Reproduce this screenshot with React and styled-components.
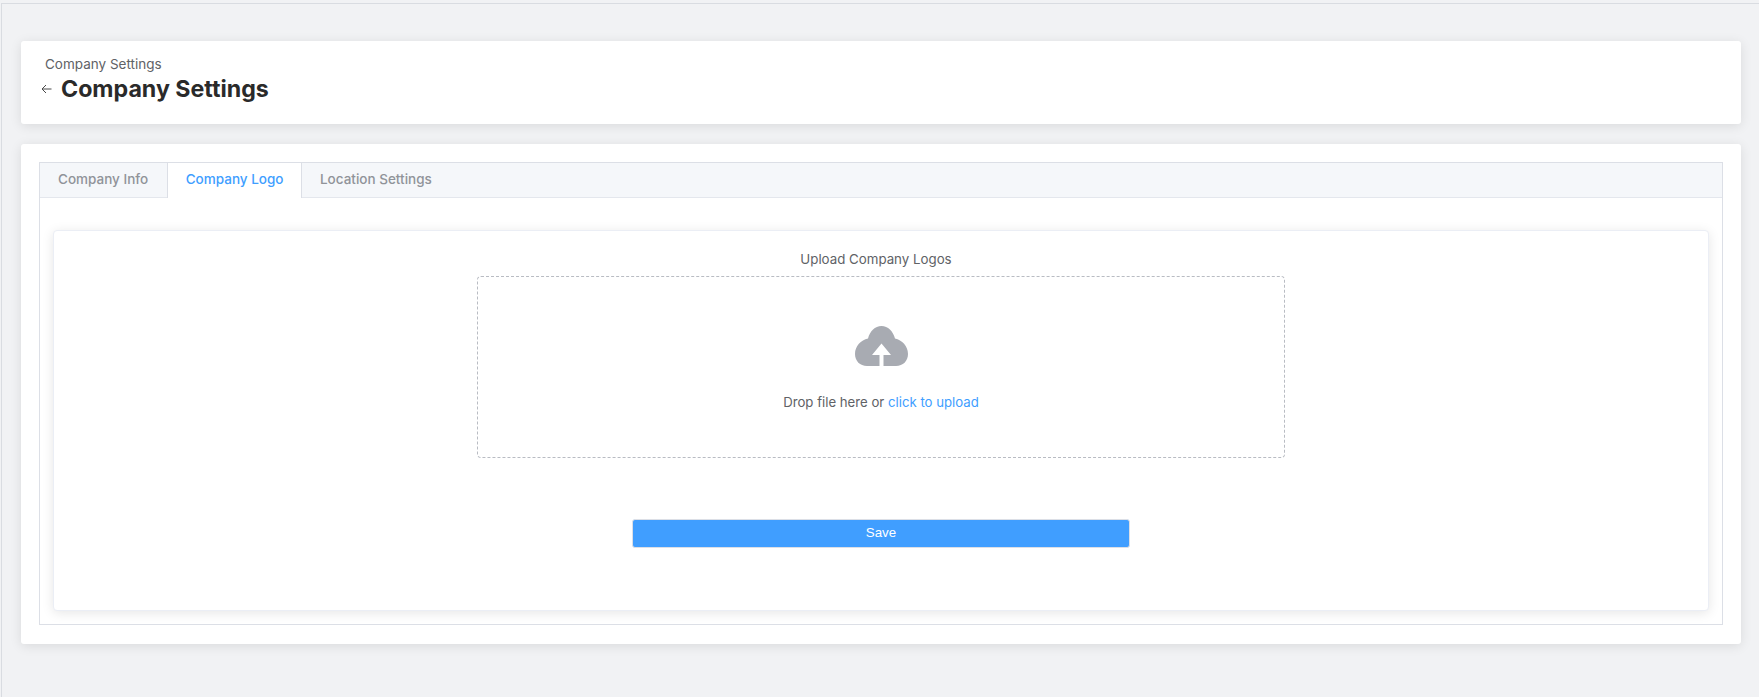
import React, { useState } from 'react';
import styled, { createGlobalStyle } from 'styled-components';

const GlobalStyle = createGlobalStyle`
  html, body {
    margin: 0;
    padding: 0;
    height: 100%;
    background: #f1f2f4;
  }
  body {
    font-family: Inter, "Open Sans", sans-serif;
    overflow: hidden;
  }
`;

const tabs = ['Company Info', 'Company Logo', 'Location Settings'];

function App() {
  const [activeTab, setActiveTab] = useState('Company Logo');

  return (
    <>
      <GlobalStyle />
      <Page>
        <Card>
          <HeaderInner>
            <Breadcrumb>Company Settings</Breadcrumb>
            <TitleRow>
              <BackIcon width="11" height="10" viewBox="0 0 11 10" aria-hidden="true">
                <path d="M10.500 5H1M5 1L1 5l4 4" fill="none" stroke="#4a4a4a" strokeWidth="1" />
              </BackIcon>
              <Title>Company Settings</Title>
            </TitleRow>
          </HeaderInner>
        </Card>

        <ContentCard>
          <TabsBox>
            <TabBar>
              {tabs.map((tab) => (
                <Tab key={tab} $active={tab === activeTab} onClick={() => setActiveTab(tab)}>
                  {tab}
                </Tab>
              ))}
            </TabBar>
            <TabBody>
              <Panel>
                <UploadLabel>Upload Company Logos</UploadLabel>
                <DropZone>
                  <svg width="53" height="40" viewBox="0 0 53 40" aria-hidden="true">
                    <path
                      fill="#a8abb2"
                      d="M12 40C5 40 0 35 0 28C0 20 6 14 13 12.500C15 5 20 0 26.500 0C33 0 38 5 40 12.500C47 14 53 20 53 28C53 35 48 40 41 40L28.500 40L28.500 29L36 29L26.500 17.500L17 29L24.500 29L24.500 40Z"
                    />
                  </svg>
                  <DropText>
                    Drop file here or <UploadLink>click to upload</UploadLink>
                  </DropText>
                </DropZone>
                <SaveButton type="button">Save</SaveButton>
              </Panel>
            </TabBody>
          </TabsBox>
        </ContentCard>
      </Page>
    </>
  );
}

const Page = styled.div`
  box-sizing: border-box;
  height: 694px;
  margin: 3px 0 0 1px;
  padding: 37px 18px 0 19px;
  border-top: 1px solid #d9dce1;
  border-left: 1px solid #d9dce1;
  background: #f1f2f4;
`;

const Card = styled.section`
  background: #fff;
  border-radius: 3px;
  box-shadow: 0 2px 12px rgba(0, 0, 0, 0.1);
`;

const HeaderInner = styled.div`
  box-sizing: border-box;
  height: 83px;
  padding: 15px 20px 0;
`;

const Breadcrumb = styled.div`
  margin-left: 4px;
  font-size: 13.5px;
  line-height: 16px;
  color: #606266;
`;

const TitleRow = styled.div`
  display: flex;
  align-items: center;
  margin-top: 2px;
`;

const BackIcon = styled.svg`
  margin-right: 9px;
  flex-shrink: 0;
`;

const Title = styled.h1`
  margin: 0;
  font-size: 23.2px;
  line-height: 30px;
  font-weight: 700;
  color: #2a2a2a;
`;

const ContentCard = styled(Card)`
  margin-top: 20px;
  box-sizing: border-box;
  height: 500px;
  padding: 18px 18px 19px;
`;

const TabsBox = styled.div`
  box-sizing: border-box;
  height: 100%;
  display: flex;
  flex-direction: column;
  border: 1px solid #dcdfe6;
`;

const TabBar = styled.div`
  display: flex;
  height: 34px;
  flex-shrink: 0;
  background: #f5f7fa;
  border-bottom: 1px solid #e4e7ed;
`;

const Tab = styled.div`
  box-sizing: border-box;
  height: 35px;
  padding: 0 17.5px 0 18px;
  font-size: 13.5px;
  font-weight: 500;
  line-height: 33px;
  cursor: pointer;
  color: ${(p) => (p.$active ? '#409eff' : '#909399')};
  background: ${(p) => (p.$active ? '#fff' : 'transparent')};
  border-right: 1px solid ${(p) => (p.$active ? '#dcdfe6' : 'transparent')};
  border-left: 1px solid ${(p) => (p.$active ? '#dcdfe6' : 'transparent')};
  margin-left: ${(p) => (p.$active ? '0' : '-1px')};
`;

const TabBody = styled.div`
  flex: 1;
  min-height: 0;
  padding: 32px 13px 13px;
`;

const Panel = styled.div`
  box-sizing: border-box;
  height: 100%;
  display: flex;
  flex-direction: column;
  align-items: center;
  padding-top: 19px;
  background: #fff;
  border: 1px solid #ebeef5;
  border-radius: 4px;
  box-shadow: 0 2px 12px rgba(0, 0, 0, 0.1);
`;

const UploadLabel = styled.div`
  padding-right: 10px;
  font-size: 13.3px;
  line-height: 18px;
  color: #606266;
`;

const DropZone = styled.div`
  box-sizing: border-box;
  width: 808px;
  height: 182px;
  margin-top: 8px;
  padding-top: 49px;
  display: flex;
  flex-direction: column;
  align-items: center;
  border: 1px dashed #b9bcc3;
  border-radius: 4px;
`;

const DropText = styled.div`
  margin-top: 27px;
  font-size: 13.2px;
  line-height: 18px;
  color: #606266;
`;

const UploadLink = styled.span`
  color: #409eff;
`;

const SaveButton = styled.button`
  width: 498px;
  height: 29px;
  margin-top: 61px;
  padding: 0 0 2px;
  border: 1px solid #dcdfe6;
  border-radius: 3px;
  background: #409eff;
  color: #fff;
  font-family: "Liberation Sans", Arial, sans-serif;
  font-size: 13.333px;
  cursor: pointer;
`;

export default App;
